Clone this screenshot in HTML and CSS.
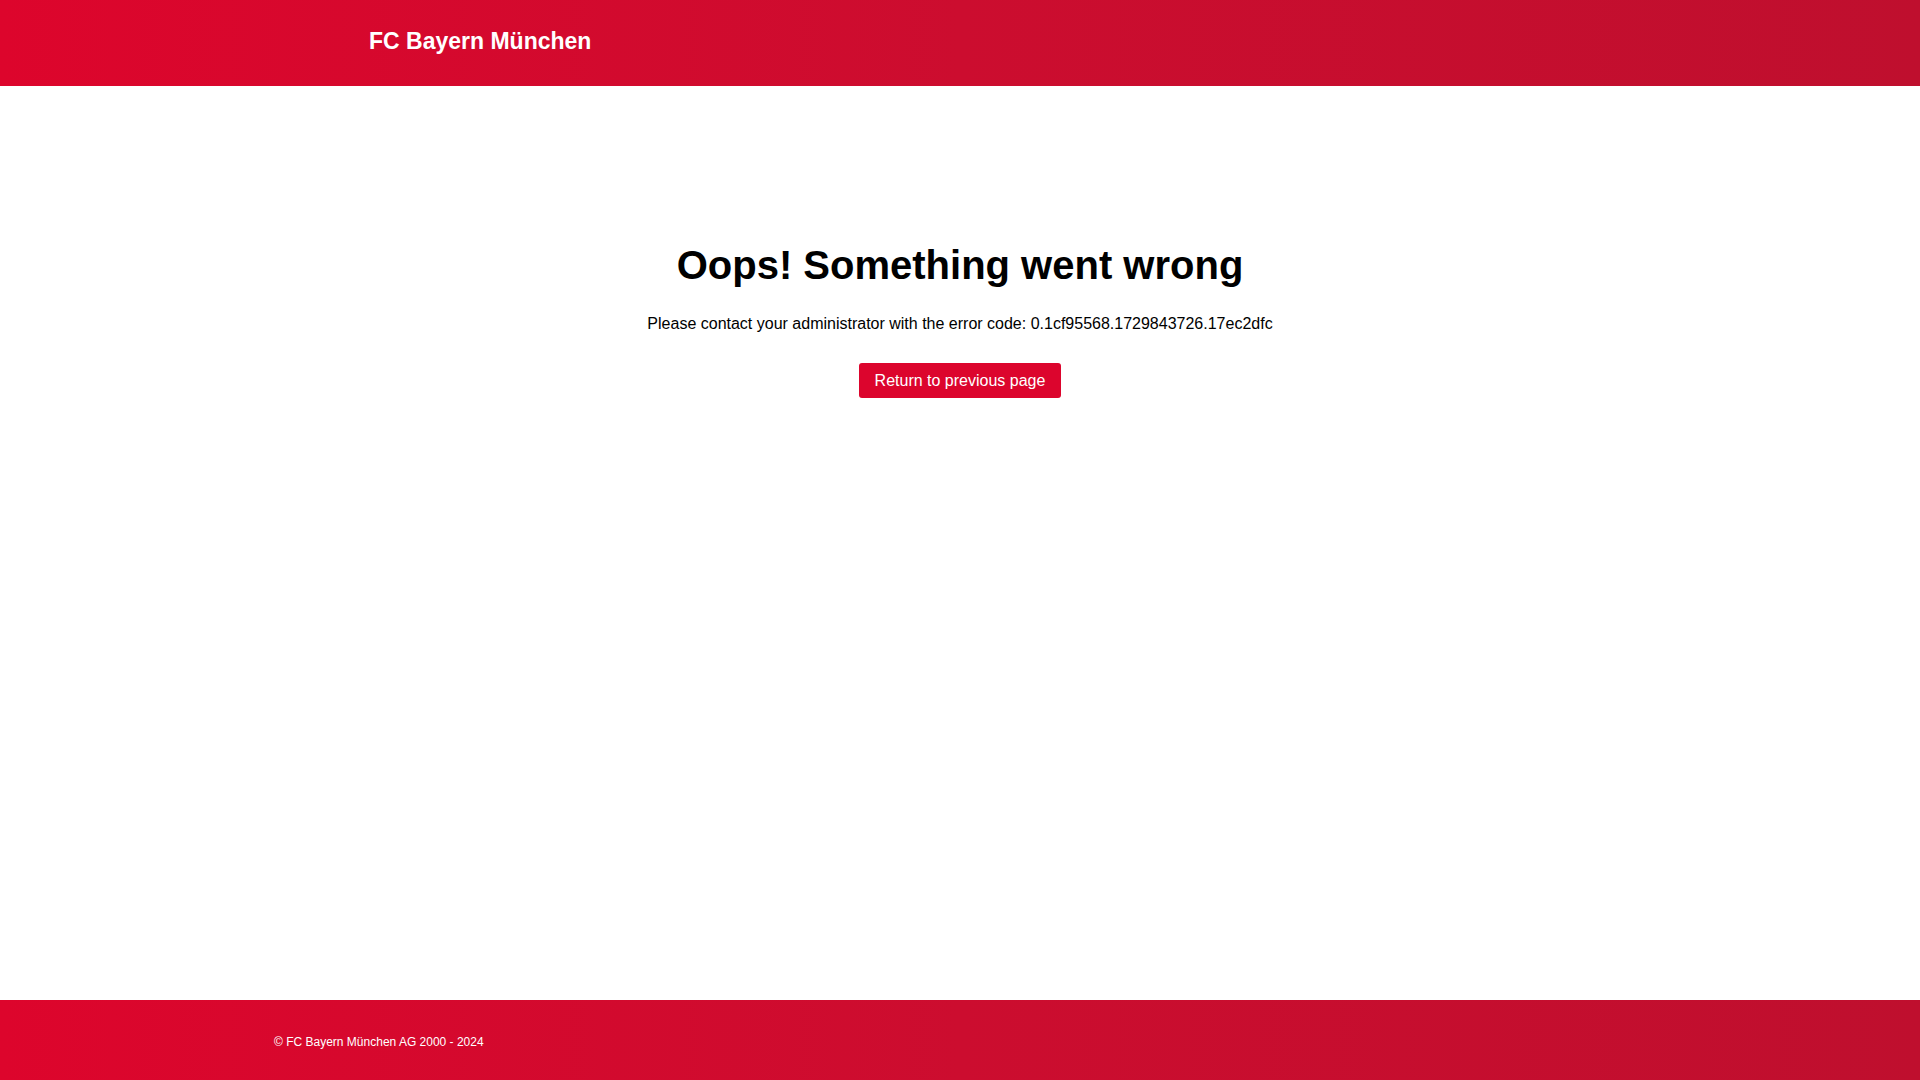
FILE: index.html
```html
<!DOCTYPE html>
<html lang="en">

<head>
    <meta charset="UTF-8">
    <meta name="viewport" content="width=device-width, initial-scale=1.0">
    <title>FC Bayern München</title>
    <link rel="stylesheet" href="styles.css">
</head>

<body>
    <header class="site-header">
        <div class="brand">FC Bayern München</div>
    </header>

    <main class="error">
        <h1>Oops! Something went wrong</h1>
        <p>Please contact your administrator with the error code: 0.1cf95568.1729843726.17ec2dfc</p>
        <button type="button" class="back-button">Return to previous page</button>
    </main>

    <footer class="site-footer">
        <div class="copyright">© FC Bayern München AG 2000 - 2024</div>
    </footer>
</body>

</html>
```

FILE: styles.css
```css
body {
    display: flex;
    flex-direction: column;
    min-height: 100vh;
    margin: 0;
    font-family: "Liberation Sans", Arial, sans-serif;
    color: #000;
}

.site-header,
.site-footer {
    background: linear-gradient(90deg, #dd052c 0%, #cc0d2f 50%, #bf0f2e 100%);
    color: #fff;
}

.site-header {
    display: flex;
    align-items: center;
    height: 86px;
    padding: 0 0 4px 369px;
    box-sizing: border-box;
}

.brand {
    font-size: 23px;
    font-weight: bold;
}

.error {
    flex: 1;
    display: flex;
    flex-direction: column;
    align-items: center;
    padding-top: 155px;
    text-align: center;
}

.error h1 {
    margin: 0;
    font-size: 40px;
    line-height: 48px;
}

.error p {
    margin: 23px 0 0;
    font-size: 16px;
    line-height: 24px;
}

.back-button {
    margin-top: 27px;
    padding: 6px 16px 5px;
    border: none;
    border-radius: 3px;
    background: #dc052d;
    color: #fff;
    font-family: inherit;
    font-size: 16px;
    line-height: 24px;
    cursor: pointer;
}

.site-footer {
    display: flex;
    align-items: center;
    height: 80px;
    padding: 3px 0 0 274px;
    box-sizing: border-box;
}

.copyright {
    font-size: 12px;
}
```
